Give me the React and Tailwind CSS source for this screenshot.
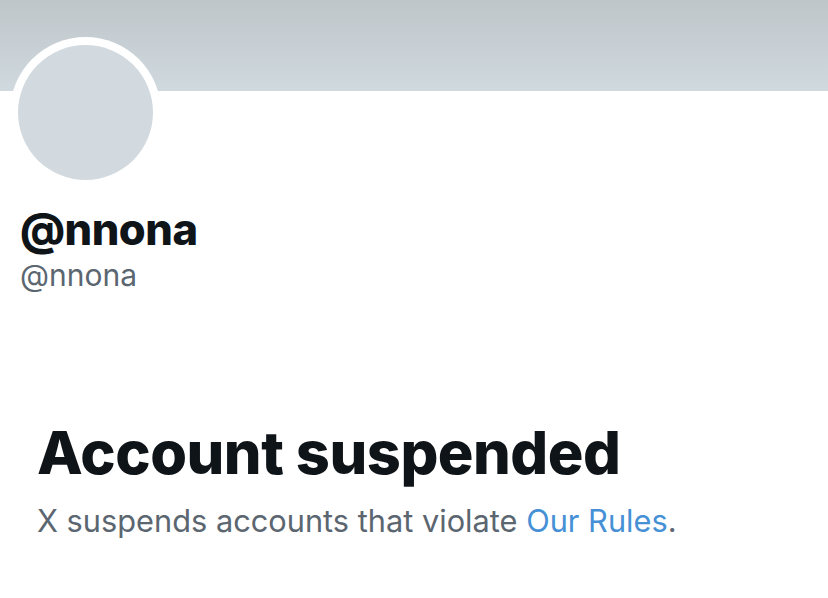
import React from 'react';

export default function App() {
    return (
        <div className="w-[828px] h-[598px] bg-white overflow-hidden" style={{ fontFamily: 'Inter, "Noto Sans", sans-serif' }}>
            {/* Banner */}
            <div className="h-[91px] bg-gradient-to-b from-[#bec6ca] to-[#d0d9de]" />

            {/* Avatar */}
            <div className="ml-[10px] -mt-[54px] w-[151px] h-[151px] rounded-full bg-white p-[8px]">
                <div className="w-full h-full rounded-full bg-[#d2dadf]" />
            </div>

            {/* Names */}
            <div className="pl-[20px] mt-[17px]">
                <h1 className="text-[43.5px] leading-[48px] font-extrabold tracking-[-0.5px] text-[#0f1419]">@nnona</h1>
                <p className="mt-[4px] text-[30px] leading-[36px] text-[#5b6670]">@nnona</p>
            </div>

            {/* Suspended message */}
            <div className="pl-[37px] mt-[127px]">
                <h2 className="text-[59.5px] leading-[64px] font-extrabold tracking-[-0.5px] text-[#0f1419]">Account suspended</h2>
                <p className="mt-[19px] text-[30.75px] leading-[36px] text-[#5b6670]">
                    X suspends accounts that violate <span className="text-[#4690d6]">Our Rules</span>.
                </p>
            </div>
        </div>
    );
}
